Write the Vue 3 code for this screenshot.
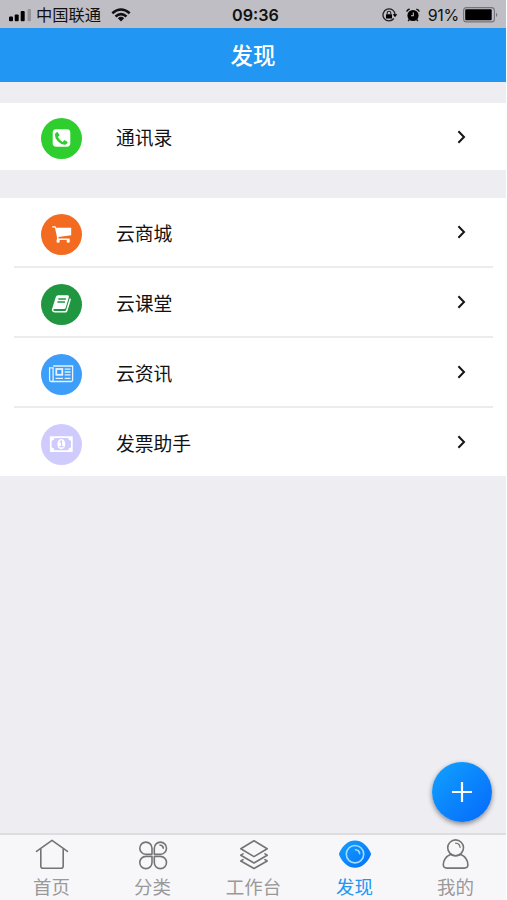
<script setup>

import { ref } from 'vue';

let active = ref('find');

const groups = [
	[
		{ id: 'phone', label: '通讯录' },
	],
	[
		{ id: 'cart', label: '云商城' },
		{ id: 'book', label: '云课堂' },
		{ id: 'news', label: '云资讯' },
		{ id: 'money', label: '发票助手' },
	],
];

const tabs = [
	{ id: 'home', label: '首页' },
	{ id: 'sort', label: '分类' },
	{ id: 'work', label: '工作台' },
	{ id: 'find', label: '发现' },
	{ id: 'mine', label: '我的' },
];

</script>

<template>

	<div class="page">
		<div class="status">
			<div class="status_left">
				<svg class="signal" width="23" height="13" viewBox="0 0 23 13">
					<rect x="0" y="7.500" width="4" height="4.800" rx="1" />
					<rect x="5.700" y="5.500" width="4" height="6.800" rx="1" />
					<rect x="11.700" y="2" width="4" height="10.300" rx="1" />
					<rect x="18.500" y="0" width="3.500" height="12.300" rx="1" fill="#94939a" />
				</svg>
				<span class="carrier">中国联通</span>
				<svg class="wifi" width="20" height="14" viewBox="0 0 20 14" fill="none" stroke="#111" stroke-width="2.500">
					<path d="M1.300 5.200Q10-2.300 18.700 5.200" />
					<path d="M4.500 8.500Q10 3.700 15.500 8.500" />
					<path d="M6.800 10.200Q10 7.300 13.200 10.200L10 13.600z" fill="#111" stroke="none" />
				</svg>
			</div>
			<span class="time">09:36</span>
			<div class="status_right">
				<svg width="16" height="14" viewBox="0 0 16 14">
					<path d="M11.800 10.500A6 6 0 1 1 13 7" fill="none" stroke="#222" stroke-width="1.300" />
					<path d="M10.700 6.300h4.600L13 9.200z" />
					<rect x="4" y="6.200" width="6" height="4.200" rx=".5" />
					<path d="M5.200 6.500V5a1.800 1.800 0 0 1 3.600 0v1.500" fill="none" stroke="#222" stroke-width="1.100" />
				</svg>
				<svg class="alarm" width="14" height="14" viewBox="0 0 14 14">
					<circle cx="7" cy="7.500" r="5.600" />
					<path d="M.8 3.700Q1.200 1.500 3.700 1.200M13.200 3.700Q12.800 1.500 10.300 1.200M3.300 11.500L2.200 13M10.700 11.500l1.100 1.500" fill="none" stroke="#111" stroke-width="1.500" />
					<path d="M7.300 4.500v3.300H5" fill="none" stroke="#c4c3ca" stroke-width="1.100" />
				</svg>
				<span class="percent">91%</span>
				<svg class="battery" width="36" height="16" viewBox="0 0 36 16">
					<rect x=".6" y=".6" width="30.800" height="14.300" rx="3" fill="none" stroke="#75747b" stroke-width="1.100" />
					<rect x="2.200" y="2.300" width="26.500" height="11" rx="1" fill="#000" />
					<path d="M33 5.500q2.600 2.300 0 4.600z" fill="#75747b" />
				</svg>
			</div>
		</div>

		<div class="header">发现</div>

		<div class="content">
			<div v-for="(group, g) in groups" :key="g" class="group">
				<div v-for="item in group" :key="item.id" class="row">
					<div class="badge" :class="item.id">
						<svg v-if="item.id == 'phone'" width="41" height="41" viewBox="0 0 41 41">
							<rect x="11.700" y="11.200" width="17.600" height="17.500" rx="3.400" fill="#fff" />
							<path d="M16.600 14.100l2 3.200-1.700 1.700q1.600 3.400 4.800 4.900l1.700-1.800 3.200 1.900q-.4 2.700-3.100 2.700-3.500-.2-6.700-3.500t-2.900-6.700q.4-1.900 2.700-2.400z" fill="#2dce2d" />
						</svg>
						<svg v-else-if="item.id == 'cart'" width="41" height="41" viewBox="0 0 41 41" fill="#fff">
							<path d="M11.200 12.200h3.200l.8 1.500h15v7.500l-12.900 1.900.2 1.500h11.100v1.500H15.800l.3-2.700-2.200-9.900h-2.700z" />
							<rect x="15.600" y="25.500" width="3" height="3.200" rx="1" />
							<rect x="25.700" y="25.500" width="3" height="3.200" rx="1" />
						</svg>
						<svg v-else-if="item.id == 'book'" width="41" height="41" viewBox="0 0 41 41">
							<path d="M17 11.200h9.700q1.700 0 1.200 1.900l-3.200 10.600q-.4 1.300-1.600 1.300h-9.900q-1.200 0-.8 1.200.3.800 1.300.8h10.100q1 0 1.300-1l3.500-11.400.6-.3q.9.600.5 1.900l-3.300 10.800q-.5 1.500-1.900 1.500H13.600q-2.500 0-2.800-2.400 0-.8.5-1.800L14.800 13q.6-1.800 2.200-1.800z" fill="#fff" />
							<path d="M17.300 15h7.600M16.400 18h7.600" fill="none" stroke="#1f963f" stroke-width="1.300" />
						</svg>
						<svg v-else-if="item.id == 'news'" width="41" height="41" viewBox="0 0 41 41" fill="none" stroke="#e6f3ff" stroke-width="1.300">
							<path d="M12.100 12h19.500v14q0 1.500-1.500 1.500H10.200q-1.600 0-1.600-1.600V13.800h3.500V26q0 1.500-1.700 1.500" />
							<rect x="15.300" y="15" width="6" height="5.800" stroke-width="1.800" />
							<path d="M23.700 15.200h5.800M23.700 18h5.800M23.700 20.900h5.800M14.600 24.300h7.400M23.700 24.300h5.800" />
						</svg>
						<svg v-else width="41" height="41" viewBox="0 0 41 41">
							<path fill-rule="evenodd" d="M8.900 12.300h22.800v15.600H8.900zM13.500 14q-.2 2.500-2.900 2.800v6.600q2.700.3 2.900 2.800h13.600q.2-2.500 2.900-2.800v-6.600q-2.700-.3-2.900-2.800z" fill="#fff" />
							<ellipse cx="20.300" cy="20.100" rx="4" ry="5.100" fill="#fff" />
							<path d="M18.900 18.200l1.600-1.200v5.500M18.500 22.700h4" fill="none" stroke="#cfcbfd" stroke-width="1.200" />
						</svg>
					</div>
					<span class="label">{{ item.label }}</span>
					<svg class="arrow" width="10" height="14" viewBox="0 0 10 14">
						<path d="M1.400 1.300L7 7l-5.600 5.700" fill="none" stroke="#151515" stroke-width="2" />
					</svg>
				</div>
			</div>
		</div>

		<button class="add">
			<svg width="20" height="20" viewBox="0 0 20 20">
				<path d="M10 0v20M0 10h20" stroke="#fff" stroke-width="2.200" />
			</svg>
		</button>

		<div class="tabbar">
			<div v-for="tab in tabs" :key="tab.id" class="tab" :class="{ active: active == tab.id }" @click="active = tab.id">
				<svg width="34" height="32" viewBox="0 0 34 32" fill="none" stroke="#747474" stroke-width="1.600" stroke-linejoin="round" stroke-linecap="round">
					<template v-if="tab.id == 'home'">
						<path d="M1.500 12.300L17 1.300l15.500 11" />
						<path d="M5.800 10v17q0 2.300 2.300 2.300h17.800q2.300 0 2.300-2.300V10" />
					</template>
					<template v-else-if="tab.id == 'sort'">
						<path d="M16 15.300H9.900A6.100 6.100 0 1 1 16 9.200z" />
						<path d="M18.300 15.300V9.200a6.100 6.100 0 1 1 6.100 6.100z" />
						<path d="M16 17.400v6.100a6.100 6.100 0 1 1-6.100-6.100z" />
						<path d="M18.300 17.400h6.100a6.100 6.100 0 1 1-6.100 6.100z" />
						<path d="M24 6q3 .3 3.300 3.200" />
					</template>
					<template v-else-if="tab.id == 'work'">
						<path d="M17 1.700l13.200 8L17 17.600 3.800 9.700z" />
						<path d="M6 14.800l-2.200 1.400L17 24l13.200-7.800-2.200-1.400" />
						<path d="M6 20.600L3.800 22 17 29.500 30.200 22 28 20.600" />
					</template>
					<template v-else-if="tab.id == 'find'">
						<defs>
							<linearGradient id="eye" x1="0" y1="0" x2="1" y2="1">
								<stop offset="0" stop-color="#12a0ff" />
								<stop offset="1" stop-color="#0671f7" />
							</linearGradient>
						</defs>
						<path d="M1.300 13.700C5 6 10.500 1.500 17 1.500S29 6 32.700 13.700q.6 1.300 0 2.600C29 24.500 23.500 28.800 17 28.800S5 24.500 1.300 16.300q-.6-1.300 0-2.600z" fill="url(#eye)" stroke="none" />
						<circle cx="17" cy="15.200" r="8.700" stroke="#a4dcff" />
						<path d="M17.500 10.700q3.700.3 4.200 4" stroke="#a4dcff" />
					</template>
					<template v-else>
						<circle cx="16.600" cy="8.800" r="7.900" />
						<path d="M11.800 15.200q-7.500 3.500-7.500 10.600 0 3.300 3.600 3.300h17.400q3.600 0 3.600-3.300 0-7.100-7.500-10.600" />
						<path d="M11.800 15.600q4.800 2.400 9.600 0" />
						<path d="M16.600 4.200q4 .3 4.500 4.200" stroke-width="1.200" />
					</template>
				</svg>
				<span>{{ tab.label }}</span>
			</div>
		</div>
	</div>

</template>

<style>
	body {
		background-color: #fff;
	}
</style>

<style scoped>

	.page {
		width: 506px;
		height: 900px;
		position: relative;
		display: flex;
		flex-direction: column;
		background-color: #eeedf2;
		font-family: "Liberation Sans", "Noto Sans CJK SC", sans-serif;
		color: #111;
		overflow: hidden;
	}

	.status {
		height: 28px;
		flex: none;
		display: grid;
		grid-template-columns: 1fr auto 1fr;
		align-items: center;
		padding: 2px 7px 0 9px;
		box-sizing: border-box;
		background-color: #bfbec5;
		line-height: 26px;
	}

	.status_left, .status_right {
		display: flex;
		align-items: center;
	}

	.status_right {
		justify-content: flex-end;
	}

	.carrier {
		margin-left: 4px;
		font-size: 16.3px;
	}

	.wifi {
		margin-left: 10px;
	}

	.time {
		padding-left: 3px;
		font-family: Inter, sans-serif;
		font-size: 16.2px;
		font-weight: 600;
	}

	.alarm {
		margin-left: 8px;
	}

	.percent {
		margin-left: 8px;
		font-family: Inter, sans-serif;
		font-size: 16px;
		letter-spacing: -0.3px;
	}

	.battery {
		margin-left: 4px;
	}

	.header {
		height: 54px;
		flex: none;
		padding-top: 2px;
		box-sizing: border-box;
		background-color: #2196f3;
		color: white;
		font-size: 22.5px;
		font-weight: 500;
		line-height: 54px;
		text-align: center;
	}

	.content {
		flex: 1;
		padding-top: 21px;
	}

	.group {
		margin-bottom: 28px;
		background-color: white;
	}

	.row {
		height: 70px;
		display: flex;
		align-items: center;
		margin: 0 13px 0 14px;
		padding: 2px 26px 0 27px;
		box-sizing: border-box;
		border-bottom: 2px solid #ececee;
	}

	.row:last-child {
		height: 68px;
		border-bottom: none;
	}

	.group:first-child .row {
		height: 67px;
	}

	.group:first-child .badge {
		margin-top: 1px;
	}

	.badge {
		width: 41px;
		height: 41px;
		margin-top: 2px;
		border-radius: 50%;
	}

	.badge svg {
		display: block;
	}

	.phone {
		background-color: #2dce2d;
	}

	.cart {
		background-color: #f36b21;
	}

	.book {
		background-color: #1f963f;
	}

	.news {
		background-color: #3d9efa;
	}

	.money {
		background-color: #cfcbfd;
	}

	.label {
		flex: 1;
		margin-left: 34px;
		padding-top: 4px;
		font-size: 18.8px;
		line-height: 28px;
	}

	.group:first-child .label {
		padding-top: 2px;
	}

	.arrow {
		margin-bottom: 2px;
	}

	.add {
		position: absolute;
		right: 14px;
		bottom: 78px;
		width: 60px;
		height: 60px;
		display: flex;
		align-items: center;
		justify-content: center;
		padding: 0;
		border: none;
		border-radius: 50%;
		background: linear-gradient(135deg, #10a2ff, #0668fa);
		box-shadow: 0 2px 5px rgba(0, 0, 0, 0.45);
	}

	.tabbar {
		height: 67px;
		flex: none;
		display: flex;
		padding: 0 0 0 1px;
		box-sizing: border-box;
		border-top: 2px solid #dddde0;
		background-color: #f7f7f9;
	}

	.tab {
		flex: 1;
		display: flex;
		flex-direction: column;
		align-items: center;
		padding-top: 4px;
		color: #999;
		font-size: 18.5px;
		line-height: 33px;
		cursor: pointer;
	}

	.tab svg {
		flex: none;
	}

	.active {
		color: #2196f3;
	}
</style>
